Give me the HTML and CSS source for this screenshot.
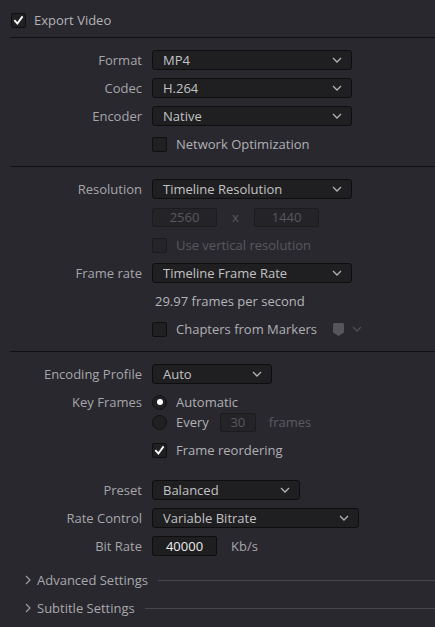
FILE: index.html
```html
<!DOCTYPE html>
<html>
<head>
<meta charset="utf-8">
<link rel="stylesheet" href="styles.css">
</head>
<body>
<div class="panel">
  <div class="header">
    <span class="cb checked"><svg viewBox="0 0 14 14"><path d="M3.2 7.4 L5.8 10.2 L10.8 3.4" /></svg></span>
    <span class="head-text">Export Video</span>
  </div>
  <div class="sep"></div>

  <div class="grid">
    <div class="label">Format</div>
    <div class="ctl"><div class="select w200"><span>MP4</span><svg class="chev" viewBox="0 0 10 6"><path d="M1 1 L5 5 L9 1"/></svg></div></div>

    <div class="label">Codec</div>
    <div class="ctl"><div class="select w200"><span>H.264</span><svg class="chev" viewBox="0 0 10 6"><path d="M1 1 L5 5 L9 1"/></svg></div></div>

    <div class="label">Encoder</div>
    <div class="ctl"><div class="select w200"><span>Native</span><svg class="chev" viewBox="0 0 10 6"><path d="M1 1 L5 5 L9 1"/></svg></div></div>

    <div class="label"></div>
    <div class="ctl"><span class="cb"></span><span class="cb-text">Network Optimization</span></div>
  </div>
  <div class="sep"></div>

  <div class="grid">
    <div class="label">Resolution</div>
    <div class="ctl"><div class="select w200"><span>Timeline Resolution</span><svg class="chev" viewBox="0 0 10 6"><path d="M1 1 L5 5 L9 1"/></svg></div></div>

    <div class="label"></div>
    <div class="ctl"><div class="num disabled">2560</div><span class="times">x</span><div class="num disabled">1440</div></div>

    <div class="label"></div>
    <div class="ctl"><span class="cb disabled"></span><span class="cb-text dim">Use vertical resolution</span></div>

    <div class="label">Frame rate</div>
    <div class="ctl"><div class="select w200"><span>Timeline Frame Rate</span><svg class="chev" viewBox="0 0 10 6"><path d="M1 1 L5 5 L9 1"/></svg></div></div>

    <div class="label"></div>
    <div class="ctl"><span class="info">29.97 frames per second</span></div>

    <div class="label"></div>
    <div class="ctl"><span class="cb"></span><span class="cb-text">Chapters from Markers</span>
      <svg class="marker" viewBox="0 0 11 13"><path d="M1.5 0 H9.5 Q11 0 11 1.5 V9.5 L5.5 13 L0 9.5 V1.5 Q0 0 1.5 0 Z"/></svg>
      <svg class="chev small" viewBox="0 0 10 6"><path d="M1 1 L5 5 L9 1"/></svg>
    </div>
  </div>
  <div class="sep"></div>

  <div class="grid">
    <div class="label">Encoding Profile</div>
    <div class="ctl"><div class="select w120"><span>Auto</span><svg class="chev" viewBox="0 0 10 6"><path d="M1 1 L5 5 L9 1"/></svg></div></div>

    <div class="label">Key Frames</div>
    <div class="radios">
      <div class="ctl"><span class="radio on"></span><span class="cb-text">Automatic</span></div>
      <div class="ctl"><span class="radio"></span><span class="cb-text">Every</span><div class="num small disabled">30</div><span class="unit dim">frames</span></div>
    </div>

    <div class="label"></div>
    <div class="ctl"><span class="cb checked"><svg viewBox="0 0 14 14"><path d="M3.2 7.4 L5.8 10.2 L10.8 3.4" /></svg></span><span class="cb-text">Frame reordering</span></div>

    <div class="label spaced">Preset</div>
    <div class="ctl spaced"><div class="select w148"><span>Balanced</span><svg class="chev" viewBox="0 0 10 6"><path d="M1 1 L5 5 L9 1"/></svg></div></div>

    <div class="label">Rate Control</div>
    <div class="ctl"><div class="select w207"><span>Variable Bitrate</span><svg class="chev" viewBox="0 0 10 6"><path d="M1 1 L5 5 L9 1"/></svg></div></div>

    <div class="label">Bit Rate</div>
    <div class="ctl"><div class="num active">40000</div><span class="unit">Kb/s</span></div>
  </div>

  <div class="collapse first">
    <svg class="caret" viewBox="0 0 6 10"><path d="M1 1 L5 5 L1 9"/></svg>
    <span class="collapse-text">Advanced Settings</span>
    <span class="line"></span>
  </div>
  <div class="collapse">
    <svg class="caret" viewBox="0 0 6 10"><path d="M1 1 L5 5 L1 9"/></svg>
    <span class="collapse-text">Subtitle Settings</span>
    <span class="line"></span>
  </div>
</div>
</body>
</html>
```

FILE: styles.css
```css
html, body {
  margin: 0;
  padding: 0;
  background: #29282f;
}
body {
  font-family: "Open Sans", "Noto Sans", sans-serif;
  font-size: 13px;
  color: #a9a9ac;
  width: 435px;
  height: 627px;
  overflow: hidden;
}
.panel {
  display: flex;
  flex-direction: column;
}
.header {
  display: flex;
  align-items: center;
  height: 14px;
  padding: 13px 0 10px 11px;
}
.head-text {
  margin-left: 8px;
  color: #b3b3b6;
  line-height: 14px;
}
.sep {
  margin-left: 10px;
  height: 1px;
  background: #111113;
}
.grid {
  display: grid;
  grid-template-columns: 142px auto;
  column-gap: 10px;
  row-gap: 8px;
  padding: 12px 0;
}
.label {
  text-align: right;
  height: 20px;
  line-height: 20px;
  color: #a6a6a9;
  white-space: nowrap;
}
.ctl {
  display: flex;
  align-items: center;
  height: 20px;
}
.spaced {
  margin-top: 12px;
}
.radios {
  display: flex;
  flex-direction: column;
}
.select {
  box-sizing: border-box;
  height: 20px;
  background: #1f1f21;
  border: 1px solid #0e0e0f;
  border-radius: 3px;
  display: flex;
  align-items: center;
  justify-content: space-between;
  padding: 0 9px 0 10px;
  color: #c2c2c4;
}
.w200 { width: 200px; }
.w120 { width: 120px; }
.w148 { width: 148px; }
.w207 { width: 207px; }
.chev {
  width: 10px;
  height: 6px;
  fill: none;
  stroke: #b2b2b5;
  stroke-width: 1.3;
}
.chev.small {
  stroke: #4e4e53;
  margin-left: 8px;
}
.marker {
  width: 11px;
  height: 13px;
  fill: #55555a;
  margin-left: 16px;
}
.cb {
  box-sizing: border-box;
  width: 15px;
  height: 15px;
  border: 1px solid #0f0f10;
  border-radius: 2px;
  background: #202022;
  display: inline-flex;
  flex: none;
}
.cb.disabled {
  border-color: #1b1b1e;
  background: #252529;
}
.cb svg {
  width: 13px;
  height: 13px;
  fill: none;
  stroke: #ffffff;
  stroke-width: 2;
  stroke-linecap: square;
}
.cb-text {
  margin-left: 9px;
  color: #b0b0b3;
}
.dim {
  color: #58585d;
}
.info {
  margin-left: 3px;
  color: #b5b5b8;
}
.num {
  box-sizing: border-box;
  width: 65px;
  height: 20px;
  border-radius: 2px;
  display: flex;
  align-items: center;
  justify-content: center;
}
.num.disabled {
  border: 1px solid #1c1c1f;
  background: #242428;
  color: #58585c;
  height: 19px;
}
.num.small {
  width: 36px;
  margin-left: 11px;
}
.num.active {
  background: #1e1e20;
  border: 1px solid #0e0e0f;
  color: #ececec;
}
.times {
  width: 37px;
  text-align: center;
  color: #58585c;
}
.unit {
  margin-left: 14px;
  color: #a6a6a9;
}
.unit.dim {
  margin-left: 13px;
  color: #5b5b60;
}
.radio {
  box-sizing: border-box;
  width: 15px;
  height: 15px;
  border-radius: 50%;
  background: #202022;
  border: 1px solid #111113;
  display: inline-flex;
  align-items: center;
  justify-content: center;
  flex: none;
}
.radio.on::after {
  content: "";
  width: 6px;
  height: 6px;
  border-radius: 50%;
  background: #ffffff;
}
.collapse {
  display: flex;
  align-items: center;
  height: 20px;
  padding-left: 25px;
  margin-top: 8px;
}
.collapse.first {
  margin-top: 2px;
}
.caret {
  width: 6px;
  height: 10px;
  fill: none;
  stroke: #9d9da0;
  stroke-width: 1.2;
  flex: none;
}
.collapse-text {
  margin-left: 6px;
  color: #a8a8ab;
  white-space: nowrap;
}
.line {
  flex: 1;
  height: 1px;
  background: #47474d;
  margin-left: 10px;
}
```
